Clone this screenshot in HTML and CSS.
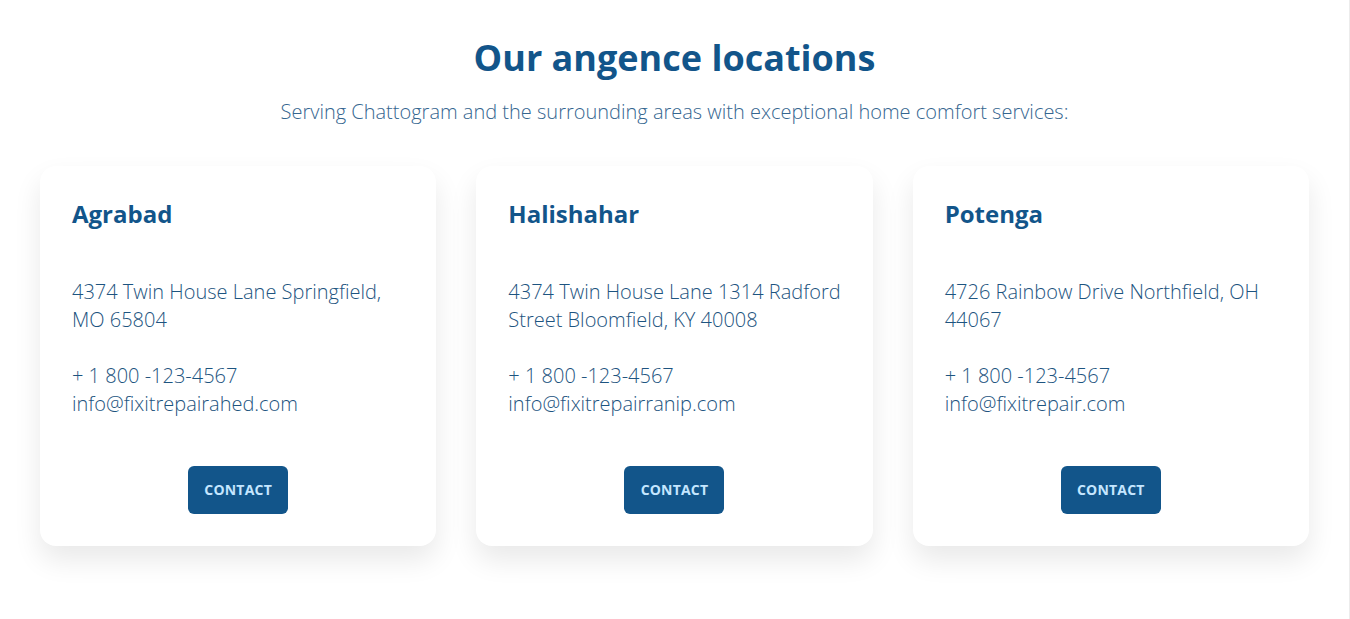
FILE: index.html
```html
<!DOCTYPE html>
<html lang="en">
<head>
<meta charset="utf-8">
<title>Our angence locations</title>
<link rel="stylesheet" href="styles.css">
</head>
<body>
<div class="page">
  <section class="locations">
    <header class="locations-head">
      <h1 class="title">Our angence locations</h1>
      <p class="subtitle">Serving Chattogram and the surrounding areas with exceptional home comfort services:</p>
    </header>
    <div class="cards">
      <article class="card">
        <h2 class="card-title">Agrabad</h2>
        <p class="card-text">4374 Twin House Lane Springfield, MO 65804</p>
        <p class="card-text">+ 1 800 -123-4567<br>info@fixitrepairahed.com</p>
        <div class="card-actions"><a class="btn" href="#">CONTACT</a></div>
      </article>
      <article class="card">
        <h2 class="card-title">Halishahar</h2>
        <p class="card-text">4374 Twin House Lane 1314 Radford Street Bloomfield, KY 40008</p>
        <p class="card-text">+ 1 800 -123-4567<br>info@fixitrepairranip.com</p>
        <div class="card-actions"><a class="btn" href="#">CONTACT</a></div>
      </article>
      <article class="card">
        <h2 class="card-title">Potenga</h2>
        <p class="card-text">4726 Rainbow Drive Northfield, OH 44067</p>
        <p class="card-text">+ 1 800 -123-4567<br>info@fixitrepair.com</p>
        <div class="card-actions"><a class="btn" href="#">CONTACT</a></div>
      </article>
    </div>
  </section>
</div>
</body>
</html>
```
FILE: styles.css
```css
* { box-sizing: border-box; }
html, body { margin: 0; padding: 0; background: #fff; }
body {
  font-family: "Open Sans", "Noto Sans", sans-serif;
  color: #1d5480;
}
.page {
  width: 1350px;
  min-height: 619px;
  border-right: 1px solid #ececec;
  overflow: hidden;
}
.locations {
  padding: 34px 40px 60px;
}
.locations-head {
  text-align: center;
}
.title {
  margin: 0;
  font-size: 36px;
  line-height: 48px;
  font-weight: 700;
  color: #12558a;
}
.subtitle {
  margin: 17px 0 0;
  font-size: 20px;
  line-height: 26px;
  font-weight: 300;
  color: #356690;
}
.cards {
  margin-top: 41px;
  display: grid;
  grid-template-columns: repeat(3, 1fr);
  gap: 40px;
}
.card {
  background: #fff;
  border-radius: 16px;
  padding: 30px 32px 32px;
  box-shadow: 0 14px 28px rgba(0, 0, 0, 0.09);
  display: flex;
  flex-direction: column;
}
.card-title {
  margin: 0 0 46px;
  font-size: 24px;
  line-height: 36px;
  font-weight: 700;
  color: #12558a;
}
.card-text {
  margin: 0 0 28px;
  font-size: 20px;
  line-height: 28px;
  font-weight: 300;
  color: #1d5480;
}
.card-actions {
  margin-top: 20px;
  display: flex;
  justify-content: center;
}
.btn {
  display: inline-flex;
  align-items: center;
  justify-content: center;
  width: 100px;
  height: 48px;
  border-radius: 6px;
  background: #12558a;
  color: #c4e6ff;
  font-size: 14px;
  font-weight: 700;
  text-decoration: none;
  letter-spacing: 0.2px;
  padding-bottom: 1px;
}
```
